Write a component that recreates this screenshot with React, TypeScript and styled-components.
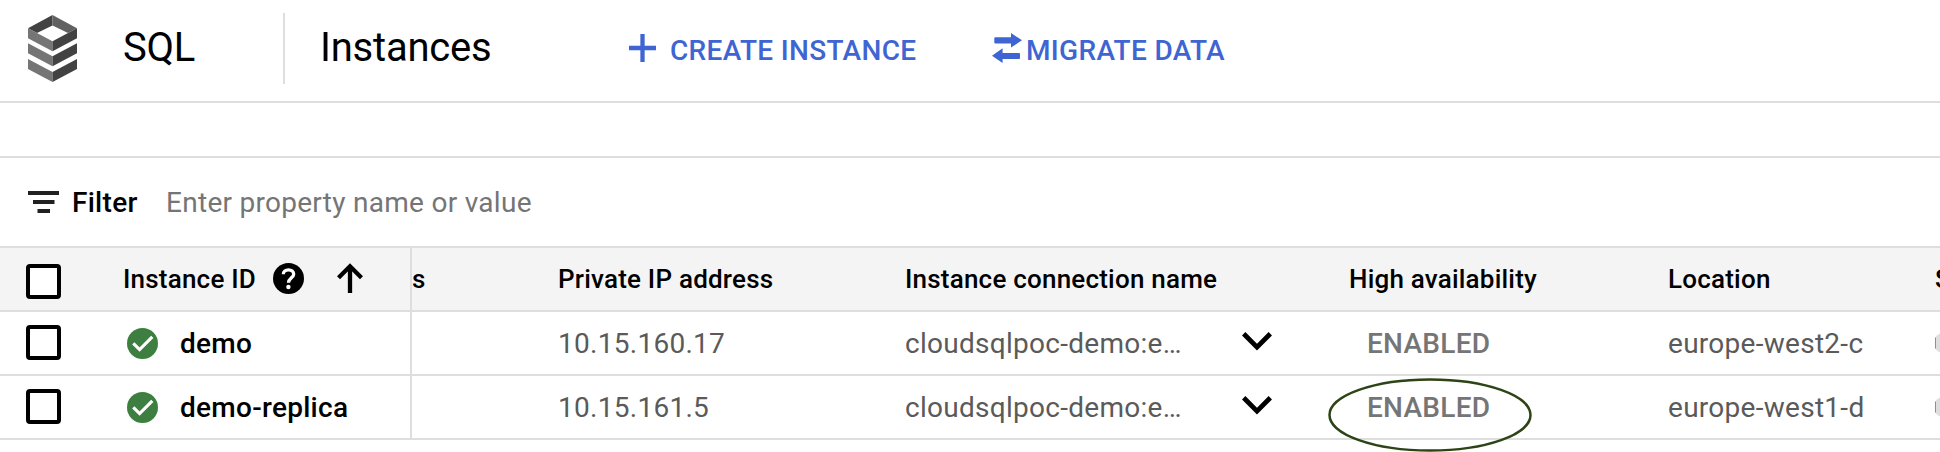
import React from "react";
import styled, { createGlobalStyle } from "styled-components";

const GlobalStyle = createGlobalStyle`
  *, *::before, *::after { box-sizing: border-box; }
  html, body { margin: 0; padding: 0; background: #fff; }
  body { font-family: Roboto, "Liberation Sans", sans-serif; color: #000; overflow: hidden; }
  svg { display: block; flex: none; }
`;

const line = "#dedede";

const Page = styled.main`
  width: 1940px;
  height: 452px;
  overflow: hidden;
  background: #fff;
  letter-spacing: 0.28px;
`;

const Toolbar = styled.header`
  display: flex;
  align-items: center;
  height: 103px;
  border-bottom: 2px solid ${line};
  padding: 0 0 5px 28px;
  white-space: nowrap;
`;

const Product = styled.div`
  flex: none;
  width: 160px;
  margin-left: 46px;
  font-size: 40px;
  line-height: 48px;
  letter-spacing: -0.2px;
`;

const Divider = styled.div`
  flex: none;
  width: 2px;
  height: 71px;
  background: ${line};
`;

const Title = styled.h1`
  flex: none;
  margin: 0;
  width: 344px;
  padding-left: 35px;
  font-size: 40px;
  line-height: 48px;
  font-weight: 400;
  letter-spacing: -0.2px;
`;

const Action = styled.button<{ $width: number; $gap: number }>`
  display: flex;
  flex: none;
  align-items: center;
  gap: ${(p) => p.$gap}px;
  width: ${(p) => p.$width}px;
  padding: 0;
  border: 0;
  background: none;
  color: #3f65d2;
  font: 500 28px/34px Roboto, sans-serif;
  letter-spacing: 0.33px;
  white-space: nowrap;
`;

const ActionLabel = styled.span`
  padding-top: 6px;
`;

const FilterBar = styled.div`
  display: flex;
  align-items: center;
  height: 92px;
  margin-top: 53px;
  padding-left: 28px;
  border-top: 2px solid ${line};
  border-bottom: 2px solid ${line};
  font-size: 28px;
  line-height: 35px;
`;

const FilterLabel = styled.span`
  width: 94px;
  margin-left: 13px;
  font-weight: 500;
`;

const Placeholder = styled.span`
  color: #757575;
`;

const Row = styled.div<{ $head?: boolean }>`
  display: grid;
  grid-template-columns: 412px 146px 347px 444px 319px 267px 40px;
  height: 64px;
  border-bottom: 2px solid ${line};
  background: ${(p) => (p.$head ? "#f4f4f4" : "#fff")};
  color: ${(p) => (p.$head ? "#000" : "#5a5a5a")};
  font-size: ${(p) => (p.$head ? 26 : 28)}px;
  font-weight: ${(p) => (p.$head ? 500 : 400)};
  letter-spacing: ${(p) => (p.$head ? 0.21 : 0.28)}px;
  line-height: ${(p) => (p.$head ? 34 : 35)}px;
  white-space: nowrap;
`;

const Cell = styled.div`
  display: flex;
  align-items: center;
  min-width: 0;
`;

const IdCell = styled(Cell)`
  padding-left: 26px;
  border-right: 2px solid ${line};
`;

const Checkbox = styled.span<{ $drop?: number }>`
  flex: none;
  width: 35px;
  height: 35px;
  margin-top: ${(p) => p.$drop ?? -1}px;
  border: 4px solid #000;
  border-radius: 4px;
  background: #fff;
`;

const IdHeading = styled.span`
  width: 150px;
  margin-left: 62px;
`;

const HeadingIcons = styled.span`
  display: flex;
  gap: 33px;
  margin-top: -2px;
`;

const StatusIcon = styled.span`
  margin-left: 66px;
`;

const InstanceName = styled.a`
  margin-left: 22px;
  color: #000;
  font-weight: 500;
`;

const ConnectionName = styled.span`
  width: 337px;
`;

const Expand = styled.span`
  margin-top: -4px;
`;

const Availability = styled.span`
  position: relative;
  margin-left: 18px;
  color: #757575;
  font-weight: 500;
`;

const Ring = styled.svg`
  position: absolute;
  left: -39px;
  top: -11.5px;
`;

const SqlLogo = () => (
  <svg width="49" height="67" viewBox="0 0 49 67">
    <path fill="#424242" d="M24.500 0v10.500L9 18 0 13.300z" />
    <path fill="#616161" d="M24.500 0v10.500L40 18l9-4.700z" />
    {[13.3, 28.3, 44].map((y) => (
      <g key={y} transform={`translate(0 ${y})`}>
        <path fill="#757575" d="M0 0l24.500 13v10L0 10z" />
        <path fill="#424242" d="M49 0L24.500 13v10L49 10z" />
      </g>
    ))}
  </svg>
);

const PlusIcon = () => (
  <svg width="27" height="28" viewBox="0 0 27 28">
    <path d="M13.500 0v28M0 14h27" stroke="currentColor" strokeWidth="4.300" />
  </svg>
);

const MigrateIcon = () => (
  <svg width="30" height="30" viewBox="0 0 30 30" fill="currentColor">
    <path d="M3.300 4.300H19V0l11 7.300-11 7.300v-4H3.300q-1 0-1-1V5.300q0-1 1-1z" />
    <path d="M27 20H10.600v-4.700L0 22.700 10.600 30v-4H27q1 0 1-1v-4q0-1-1-1z" />
  </svg>
);

const FilterIcon = () => (
  <svg width="31" height="22" viewBox="0 0 31 22">
    <path fill="#212121" d="M0 0h31v4H0zM5 9h21.500v4H5zM9.500 18H22v4H9.500z" />
  </svg>
);

const HelpIcon = () => (
  <svg width="31" height="31" viewBox="0 0 31 31">
    <circle cx="15.500" cy="15.500" r="15.500" />
    <path
      d="M10.300 11.200C10.300 8.500 12.500 6.900 15.500 6.900S20.700 8.600 20.700 11.200C20.700 14.600 15.500 15 15.500 19.800"
      fill="none"
      stroke="#fff"
      strokeWidth="3.300"
    />
    <circle cx="15.400" cy="24" r="2.200" fill="#fff" />
  </svg>
);

const SortIcon = () => (
  <svg width="26" height="30" viewBox="0 0 26 30">
    <path d="M13 30V3.200M1.500 14.700L13 3.200l11.500 11.500" fill="none" stroke="#000" strokeWidth="4.300" />
  </svg>
);

const CheckIcon = () => (
  <svg width="31" height="31" viewBox="0 0 31 31">
    <circle cx="15.500" cy="15.500" r="15.500" fill="#3c7f40" />
    <path d="M6.300 15.300l6.300 6.300L25.300 8.900" fill="none" stroke="#fff" strokeWidth="3.100" />
  </svg>
);

const ChevronIcon = () => (
  <svg width="30" height="19" viewBox="0 0 30 19">
    <path d="M1.700 1.800L15 15.100 28.300 1.800" fill="none" stroke="#000" strokeWidth="4.800" />
  </svg>
);

const UsageGauge = () => (
  <svg width="20" height="20" viewBox="0 0 20 20">
    <path fill={line} d="M0 5Q2 1.500 5 .5H20v19H5Q2 18.500 0 15z" />
    <path fill="#4fb08c" d="M0 4.500h1v11H0z" />
  </svg>
);

const instances = [
  { name: "demo", ip: "10.15.160.17", location: "europe-west2-c", circled: false },
  { name: "demo-replica", ip: "10.15.161.5", location: "europe-west1-d", circled: true },
];

export default function App() {
  return (
    <Page>
      <GlobalStyle />
      <Toolbar>
        <SqlLogo />
        <Product>SQL</Product>
        <Divider />
        <Title>Instances</Title>
        <Action $width={363} $gap={14}>
          <PlusIcon />
          <ActionLabel>CREATE INSTANCE</ActionLabel>
        </Action>
        <Action $width={240} $gap={4}>
          <MigrateIcon />
          <ActionLabel>MIGRATE DATA</ActionLabel>
        </Action>
      </Toolbar>

      <FilterBar>
        <FilterIcon />
        <FilterLabel>Filter</FilterLabel>
        <Placeholder>Enter property name or value</Placeholder>
      </FilterBar>

      <Row $head>
        <IdCell>
          <Checkbox $drop={5} />
          <IdHeading>Instance ID</IdHeading>
          <HeadingIcons>
            <HelpIcon />
            <SortIcon />
          </HeadingIcons>
        </IdCell>
        <Cell>s</Cell>
        <Cell>Private IP address</Cell>
        <Cell>Instance connection name</Cell>
        <Cell>High availability</Cell>
        <Cell>Location</Cell>
        <Cell>S</Cell>
      </Row>
      {instances.map((item) => (
        <Row key={item.name}>
          <IdCell>
            <Checkbox />
            <StatusIcon>
              <CheckIcon />
            </StatusIcon>
            <InstanceName>{item.name}</InstanceName>
          </IdCell>
          <Cell />
          <Cell>{item.ip}</Cell>
          <Cell>
            <ConnectionName>cloudsqlpoc-demo:e…</ConnectionName>
            <Expand>
              <ChevronIcon />
            </Expand>
          </Cell>
          <Cell>
            <Availability>
              ENABLED
              {item.circled && (
                <Ring width="204" height="74" viewBox="0 0 204 74">
                  <ellipse cx="102" cy="37" rx="100.500" ry="35.500" fill="none" stroke="#2d4416" strokeWidth="2.500" />
                </Ring>
              )}
            </Availability>
          </Cell>
          <Cell>{item.location}</Cell>
          <Cell>
            <UsageGauge />
          </Cell>
        </Row>
      ))}
    </Page>
  );
}
